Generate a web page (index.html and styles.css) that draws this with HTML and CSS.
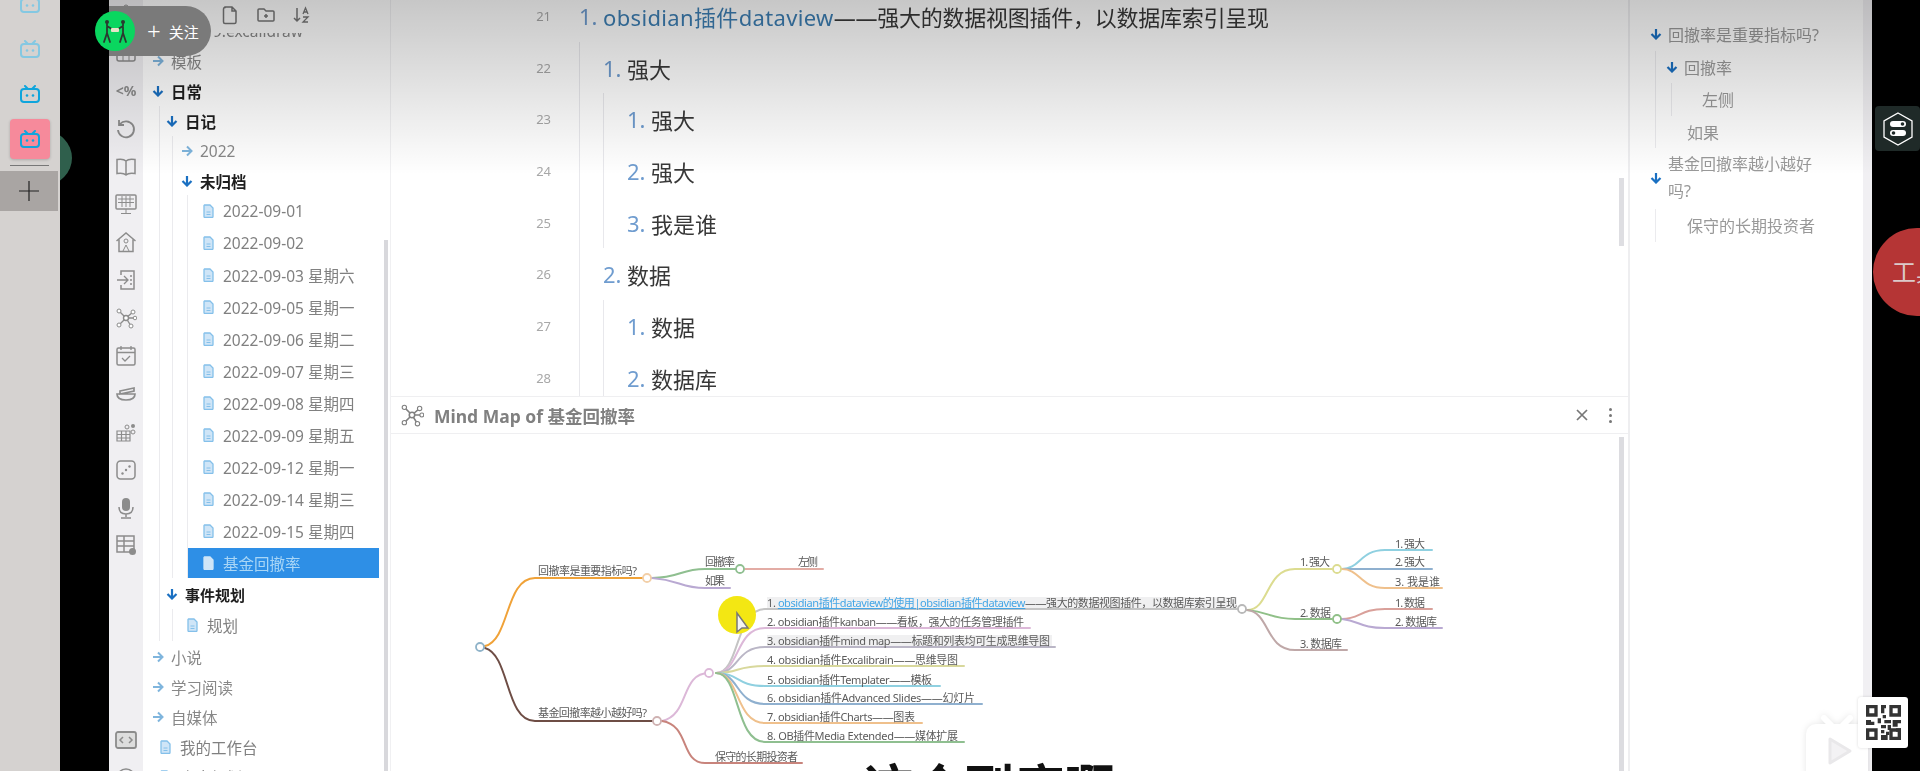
FILE: index.html
```html
<!DOCTYPE html>
<html lang="zh-CN">
<head>
  <meta charset="UTF-8" />
  <meta name="viewport" content="width=device-width, initial-scale=1" />
  <title>基金回撤率 - Obsidian</title>
  <link rel="stylesheet" href="styles.css">
</head>
<body>

  <svg class="sprites" aria-hidden="true">
    <symbol id="i-bili" viewBox="0 0 20 18"><path d="M5 1l3 3M15 1l-3 3" fill="none" stroke="currentColor" stroke-width="2" stroke-linecap="round"/><rect x="1" y="4" width="18" height="13" rx="3" fill="none" stroke="currentColor" stroke-width="2"/><circle cx="7" cy="10.5" r="1.3" fill="currentColor"/><circle cx="13" cy="10.5" r="1.3" fill="currentColor"/></symbol>
    <symbol id="i-down" viewBox="0 0 12 12"><path d="M6 1v9M1.5 6L6 10.5 10.5 6" fill="none" stroke="currentColor" stroke-width="2.2"/></symbol>
    <symbol id="i-right" viewBox="0 0 12 12"><path d="M1 6h9M6 1.5L10.5 6 6 10.5" fill="none" stroke="currentColor" stroke-width="2"/></symbol>
    <symbol id="i-doc" viewBox="0 0 11 14"><path d="M1.5 1h5.5l3 3v8.5a1 1 0 0 1-1 1H2a1 1 0 0 1-1-1v-11z" fill="#cfe5f7" stroke="currentColor" stroke-width="1.3"/><path d="M3.5 8h4M3.5 10.5h4" stroke="currentColor"/></symbol>
    <symbol id="i-file" viewBox="0 0 20 20"><path d="M5 2h7l4 4v11a1.500 1.500 0 0 1-1.500 1.500h-9.500a1.500 1.500 0 0 1-1.500-1.500v-13a1.500 1.500 0 0 1 1.500-1.500zM12 2v4h4" fill="none" stroke="currentColor" stroke-width="1.500"/></symbol>
    <symbol id="i-folder" viewBox="0 0 20 20"><path d="M2 5a1 1 0 0 1 1-1h5l2 2h7a1 1 0 0 1 1 1v8a1 1 0 0 1-1 1h-14a1 1 0 0 1-1-1zM10 9v4M8 11h4" fill="none" stroke="currentColor" stroke-width="1.500"/></symbol>
    <symbol id="i-sort" viewBox="0 0 20 20"><path d="M5 3v13M2 13l3 3 3-3" fill="none" stroke="currentColor" stroke-width="1.500"/><path d="M11 9l2.500-6 2.500 6M12 7h3M11 12h5l-5 5h5" fill="none" stroke="currentColor" stroke-width="1.300"/></symbol>
    <symbol id="i-clip" viewBox="0 0 22 22"><rect x="6" y="5" width="10" height="14" rx="2" fill="none" stroke="currentColor" stroke-width="1.500"/><circle cx="11" cy="3" r="2" fill="none" stroke="currentColor"/></symbol>
    <symbol id="i-table" viewBox="0 0 22 22"><rect x="2" y="3" width="18" height="16" rx="2" fill="none" stroke="currentColor" stroke-width="1.500"/><path d="M2 8h18M2 13.500h18M8 3v16M14 3v16" stroke="currentColor"/></symbol>
    <symbol id="i-undo" viewBox="0 0 22 22"><path d="M5 6a8 8 0 1 1-2 6M4 2v5h5" fill="none" stroke="currentColor" stroke-width="1.800"/></symbol>
    <symbol id="i-book" viewBox="0 0 22 22"><path d="M11 5C9 3 5 3 2 3.500v14c3-.5 7-.5 9 1.500 2-2 6-2 9-1.500v-14C17 3 13 3 11 5zv14" fill="none" stroke="currentColor" stroke-width="1.500"/></symbol>
    <symbol id="i-monitor" viewBox="0 0 22 22"><rect x="1" y="2" width="20" height="14" rx="1" fill="none" stroke="currentColor" stroke-width="1.500"/><path d="M3 6h16M3 9.500h16M7 3v11M11 3v11M15 3v11M11 16v4M6 20.500h10" stroke="currentColor"/></symbol>
    <symbol id="i-home" viewBox="0 0 22 22"><path d="M1.500 10L11 2l9.500 8M4 8.500V20.500h14V8.500" fill="none" stroke="currentColor" stroke-width="1.500"/><circle cx="11" cy="10" r="2" fill="none" stroke="currentColor"/><path d="M8 20l3-6 3 6" fill="none" stroke="currentColor"/></symbol>
    <symbol id="i-import" viewBox="0 0 22 22"><path d="M6 6V2h13v18H6v-4" fill="none" stroke="currentColor" stroke-width="1.500"/><path d="M2 11h11M9 7l4 4-4 4M15 7h2M15 11h2M15 15h2" fill="none" stroke="currentColor" stroke-width="1.300"/></symbol>
    <symbol id="i-graph" viewBox="0 0 22 22"><path d="M11 11L4 4M11 11l7-6M11 11H20M11 11l-7 7M11 11l5 8" stroke="currentColor" stroke-width="1.400"/><circle cx="11" cy="11" r="2.500" fill="#fff" stroke="currentColor" stroke-width="1.400"/><circle cx="4" cy="4" r="2" fill="#fff" stroke="currentColor"/><circle cx="18" cy="5" r="2" fill="#fff" stroke="currentColor"/><circle cx="20" cy="11" r="1.800" fill="#fff" stroke="currentColor"/><circle cx="4" cy="18" r="2" fill="#fff" stroke="currentColor"/><circle cx="16" cy="19" r="2" fill="#fff" stroke="currentColor"/></symbol>
    <symbol id="i-cal" viewBox="0 0 22 22"><rect x="2" y="3" width="18" height="17" rx="1.500" fill="none" stroke="currentColor" stroke-width="1.500"/><path d="M2 7.500h18M6 1v4M16 1v4M7 13l3 3 5-5" fill="none" stroke="currentColor" stroke-width="1.300"/></symbol>
    <symbol id="i-stack" viewBox="0 0 22 22"><path d="M2 11c0 4 3 6 9 6s9-2 9-6zM5 8l14-3v3l-14 3z" fill="none" stroke="currentColor" stroke-width="1.700"/></symbol>
    <symbol id="i-blocks" viewBox="0 0 22 22"><path d="M2 10h13v10H2zM2 13.500h13M2 17h13M6.500 10v10M11 10v10" fill="none" stroke="currentColor" stroke-width="1.200"/><circle cx="18" cy="5" r="2" fill="currentColor"/><circle cx="12" cy="6" r="2" fill="none" stroke="currentColor"/><circle cx="18" cy="11" r="2" fill="none" stroke="currentColor"/></symbol>
    <symbol id="i-dice" viewBox="0 0 22 22"><rect x="2" y="2" width="18" height="18" rx="3.500" fill="none" stroke="currentColor" stroke-width="1.500"/><circle cx="7.500" cy="14.500" r="1.200" fill="currentColor"/><circle cx="11" cy="11" r="1.200" fill="currentColor"/><circle cx="14.500" cy="7.500" r="1.200" fill="currentColor"/></symbol>
    <symbol id="i-mic" viewBox="0 0 22 22"><rect x="7" y="1" width="8" height="13" rx="4" fill="currentColor"/><path d="M4 10c0 5 3 7 7 7s7-2 7-7M11 17v3M6 21h10" fill="none" stroke="currentColor" stroke-width="1.500"/></symbol>
    <symbol id="i-tabledot" viewBox="0 0 22 22"><path d="M2 2h17v16H2zM2 7h17M2 12h17M9 2v16" fill="none" stroke="currentColor" stroke-width="1.500"/><circle cx="17.500" cy="17.500" r="3.500" fill="currentColor"/></symbol>
    <symbol id="i-expand" viewBox="0 0 22 22"><rect x="1" y="3" width="20" height="16" rx="2" fill="#ddd" stroke="currentColor" stroke-width="1.800"/><path d="M8 8l-3 3 3 3M14 8l3 3-3 3" fill="none" stroke="currentColor" stroke-width="1.500"/></symbol>
    <symbol id="i-circle" viewBox="0 0 22 22"><circle cx="11" cy="11" r="9" fill="none" stroke="currentColor" stroke-width="1.500"/></symbol>
  </svg>

  <div class="screen">

    <div class="tabs">
      <div class="tab tab-faded"><svg><use href="#i-bili"/></svg></div>
      <div class="tab tab-faded"><svg><use href="#i-bili"/></svg></div>
      <div class="tab"><svg><use href="#i-bili"/></svg></div>
      <div class="tab tab-active"><svg><use href="#i-bili"/></svg></div>
      <div class="tab-line"></div>
      <div class="tab-add">
        <svg viewBox="0 0 20 20"><path d="M10 0v20M0 10h20" stroke="#222" stroke-width="1.200"/></svg>
      </div>
    </div>

    <div class="letterbox">
      <div class="letterbox-circle"></div>
    </div>

    <div class="app">
      <div class="ribbon">
        <svg><use href="#i-clip"/></svg>
        <svg><use href="#i-table"/></svg>
        <span class="ribbon-text">&lt;%</span>
        <svg><use href="#i-undo"/></svg>
        <svg><use href="#i-book"/></svg>
        <svg><use href="#i-monitor"/></svg>
        <svg><use href="#i-home"/></svg>
        <svg><use href="#i-import"/></svg>
        <svg><use href="#i-graph"/></svg>
        <svg><use href="#i-cal"/></svg>
        <svg><use href="#i-stack"/></svg>
        <svg><use href="#i-blocks"/></svg>
        <svg><use href="#i-dice"/></svg>
        <svg><use href="#i-mic"/></svg>
        <svg><use href="#i-tabledot"/></svg>
        <svg class="ribbon-bottom"><use href="#i-expand"/></svg>
        <svg><use href="#i-circle"/></svg>
      </div>

      <div class="tree">
        <div class="tree-tools">
          <svg><use href="#i-file"/></svg>
          <svg><use href="#i-folder"/></svg>
          <svg><use href="#i-sort"/></svg>
        </div>
        <div class="tree-list">
          <div class="row closed row-cut">9.excalidraw</div>
          <div class="row closed"><svg class="arrow"><use href="#i-right"/></svg>模板</div>
          <div class="row open"><svg class="arrow"><use href="#i-down"/></svg>日常</div>
          <div class="children">
            <div class="row open"><svg class="arrow"><use href="#i-down"/></svg>日记</div>
            <div class="children children-2">
              <div class="row closed"><svg class="arrow"><use href="#i-right"/></svg>2022</div>
              <div class="row open"><svg class="arrow"><use href="#i-down"/></svg>未归档</div>
              <div class="children children-3">
                <div class="file"><svg class="doc"><use href="#i-doc"/></svg>2022-09-01</div>
                <div class="file"><svg class="doc"><use href="#i-doc"/></svg>2022-09-02</div>
                <div class="file"><svg class="doc"><use href="#i-doc"/></svg>2022-09-03 星期六</div>
                <div class="file"><svg class="doc"><use href="#i-doc"/></svg>2022-09-05 星期一</div>
                <div class="file"><svg class="doc"><use href="#i-doc"/></svg>2022-09-06 星期二</div>
                <div class="file"><svg class="doc"><use href="#i-doc"/></svg>2022-09-07 星期三</div>
                <div class="file"><svg class="doc"><use href="#i-doc"/></svg>2022-09-08 星期四</div>
                <div class="file"><svg class="doc"><use href="#i-doc"/></svg>2022-09-09 星期五</div>
                <div class="file"><svg class="doc"><use href="#i-doc"/></svg>2022-09-12 星期一</div>
                <div class="file"><svg class="doc"><use href="#i-doc"/></svg>2022-09-14 星期三</div>
                <div class="file"><svg class="doc"><use href="#i-doc"/></svg>2022-09-15 星期四</div>
                <div class="file file-selected"><svg class="doc"><use href="#i-doc"/></svg>基金回撤率</div>
              </div>
            </div>
            <div class="row open row-small"><svg class="arrow"><use href="#i-down"/></svg>事件规划</div>
            <div class="children children-2b">
              <div class="file"><svg class="doc"><use href="#i-doc"/></svg>规划</div>
            </div>
          </div>
          <div class="row closed row-after"><svg class="arrow"><use href="#i-right"/></svg>小说</div>
          <div class="row closed"><svg class="arrow"><use href="#i-right"/></svg>学习阅读</div>
          <div class="row closed"><svg class="arrow"><use href="#i-right"/></svg>自媒体</div>
          <div class="file file-top"><svg class="doc"><use href="#i-doc"/></svg>我的工作台</div>
          <div class="file file-top"><svg class="doc"><use href="#i-doc"/></svg>未来规划</div>
        </div>
        <div class="tree-scroll"></div>
      </div>

      <div class="workspace">
        <div class="editor">
          <div class="line"><span class="gutter">21</span><span class="num">1.</span><span class="link">obsidian插件dataview</span><span class="tail">——强大的数据视图插件，以数据库索引呈现</span></div>
          <div class="line"><span class="gutter">22</span><span class="guide"></span><span class="num">1.</span>强大</div>
          <div class="line"><span class="gutter">23</span><span class="guide"></span><span class="guide"></span><span class="num">1.</span>强大</div>
          <div class="line"><span class="gutter">24</span><span class="guide"></span><span class="guide"></span><span class="num">2.</span>强大</div>
          <div class="line"><span class="gutter">25</span><span class="guide"></span><span class="guide"></span><span class="num">3.</span>我是谁</div>
          <div class="line"><span class="gutter">26</span><span class="guide"></span><span class="num">2.</span>数据</div>
          <div class="line"><span class="gutter">27</span><span class="guide"></span><span class="guide"></span><span class="num">1.</span>数据</div>
          <div class="line"><span class="gutter">28</span><span class="guide"></span><span class="guide"></span><span class="num">2.</span>数据库</div>
          <div class="editor-scroll"></div>
        </div>

        <div class="map-head">
          <svg class="map-icon"><use href="#i-graph"/></svg>
          <span class="map-title">Mind Map of 基金回撤率</span>
          <svg class="map-close" viewBox="0 0 14 14"><path d="M2 2l10 10M12 2L2 12" stroke="#777" stroke-width="1.700"/></svg>
          <span class="map-more"><i></i><i></i><i></i></span>
        </div>

        <div class="map-body">
          <svg class="map" viewBox="391 434 1237 337">
            <rect class="mark" x="767" y="597" width="470" height="12"/>
            <rect class="mark" x="767" y="635" width="285" height="12"/>

            <g class="branch">
              <path d="M485 646C510 640 505 578 535 578L643 578" stroke="#f0a238" stroke-width="2.800"/>
              <path d="M485 648C510 655 505 721 535 721L652 721" stroke="#6e4d45" stroke-width="2.800"/>
              <path d="M652 578C680 578 680 569 705 569L736 569" stroke="#8fbf90"/>
              <path d="M745 569L823 569" stroke="#e3aca5"/>
              <path d="M652 578C680 580 680 588 705 588L730 588" stroke="#b9a9d2"/>
              <path d="M662 721C690 715 680 673 709 673" stroke="#dcb8d8"/>
              <path d="M662 721C690 725 680 763 705 763L802 763" stroke="#c8847c"/>
              <path d="M716 673C740 673 735 609 765 609L1237 609" stroke="#c4c4c4"/>
              <path d="M716 673C740 673 735 628 765 628L1030 628" stroke="#dcb8d8"/>
              <path d="M716 673C740 673 735 647 765 647L1055 647" stroke="#bab6c6"/>
              <path d="M716 673C740 673 735 666 765 666L964 666" stroke="#d8d89c"/>
              <path d="M716 673C740 673 735 686 765 686L940 686" stroke="#8fd0e0"/>
              <path d="M716 673C740 673 735 704 765 704L982 704" stroke="#8fb0cf"/>
              <path d="M716 673C740 673 735 723 765 723L922 723" stroke="#efc08c"/>
              <path d="M716 673C740 673 735 742 765 742L964 742" stroke="#8fbf90"/>
              <path d="M1247 610C1270 610 1265 569 1295 569L1332 569" stroke="#dcdc90"/>
              <path d="M1247 610C1270 612 1270 619 1295 619L1332 619" stroke="#90c088"/>
              <path d="M1247 610C1270 612 1265 650 1295 650L1347 650" stroke="#bfa8a8"/>
              <path d="M1342 569C1360 569 1360 550 1385 550L1432 550" stroke="#8fd0e0"/>
              <path d="M1342 569L1432 569" stroke="#8fb0cf"/>
              <path d="M1342 569C1360 569 1360 588 1385 588L1442 588" stroke="#efc08c"/>
              <path d="M1342 619C1360 619 1360 609 1385 609L1432 609" stroke="#d9a09a"/>
              <path d="M1342 619C1360 621 1360 628 1385 628L1442 628" stroke="#b9a9d2"/>
            </g>

            <g class="dots">
              <circle cx="480" cy="647" r="4" stroke="#8fb3c9"/>
              <circle cx="647" cy="578" r="4" stroke="#f2cfa8"/>
              <circle cx="740" cy="569" r="4" stroke="#8fbf90"/>
              <circle cx="657" cy="721" r="4" stroke="#cfb2b2"/>
              <circle cx="709" cy="673" r="4" stroke="#dcb8d8"/>
              <circle cx="1242" cy="609" r="4" stroke="#b8b8b8"/>
              <circle cx="1337" cy="569" r="4" stroke="#dcdc90"/>
              <circle cx="1337" cy="619" r="4" stroke="#90c088"/>
            </g>

            <g class="labels">
              <text x="538" y="575" textLength="99">回撤率是重要指标吗?</text>
              <text x="538" y="717" textLength="109">基金回撤率越小越好吗?</text>
              <text x="705" y="566" textLength="30">回撤率</text>
              <text x="798" y="566" textLength="20">左侧</text>
              <text x="705" y="585" textLength="20">如果</text>
              <text x="715" y="761" textLength="83">保守的长期投资者</text>
              <text x="767" y="607" textLength="470">1. <tspan class="map-link">obsidian插件dataview的使用|obsidian插件dataview</tspan>——强大的数据视图插件，以数据库索引呈现</text>
              <text x="767" y="626" textLength="257">2. obsidian插件kanban——看板，强大的任务管理插件</text>
              <text x="767" y="645" textLength="283">3. obsidian插件mind map——标题和列表均可生成思维导图</text>
              <text x="767" y="664" textLength="191">4. obsidian插件Excalibrain——思维导图</text>
              <text x="767" y="684" textLength="165">5. obsidian插件Templater——模板</text>
              <text x="767" y="702" textLength="208">6. obsidian插件Advanced Slides——幻灯片</text>
              <text x="767" y="721" textLength="148">7. obsidian插件Charts——图表</text>
              <text x="767" y="740" textLength="191">8. OB插件Media Extended——媒体扩展</text>
              <text x="1300" y="566" textLength="30">1. 强大</text>
              <text x="1300" y="617" textLength="31">2. 数据</text>
              <text x="1300" y="648" textLength="42">3. 数据库</text>
              <text x="1395" y="548" textLength="30">1. 强大</text>
              <text x="1395" y="566" textLength="30">2. 强大</text>
              <text x="1395" y="586" textLength="45">3. 我是谁</text>
              <text x="1395" y="607" textLength="30">1. 数据</text>
              <text x="1395" y="626" textLength="42">2. 数据库</text>
            </g>

            <circle cx="737" cy="615" r="19" fill="#f3e713"/>
            <path d="M737 613l0 19 5-4 6 0z" fill="#f4f4f0" stroke="#777" stroke-width="1.500"/>
          </svg>
          <div class="map-scroll"></div>
        </div>
      </div>

      <div class="outline">
        <div class="toc"><svg class="arrow"><use href="#i-down"/></svg>回撤率是重要指标吗?</div>
        <div class="toc-kids">
          <div class="toc"><svg class="arrow"><use href="#i-down"/></svg>回撤率</div>
          <div class="toc-kids">
            <div class="toc toc-leaf">左侧</div>
          </div>
          <div class="toc toc-plain">如果</div>
        </div>
        <div class="toc toc-wrap"><svg class="arrow"><use href="#i-down"/></svg><span>基金回撤率越小越好吗?</span></div>
        <div class="toc-kids">
          <div class="toc toc-plain">保守的长期投资者</div>
        </div>
      </div>

      <div class="app-edge"></div>
    </div>

    <!-- video player stuff on top of the recording -->
    <div class="top-shade"></div>

    <div class="follow">
      <span class="follow-plus">+</span>关注
    </div>
    <div class="avatar">
      <svg viewBox="0 0 40 40">
        <g fill="none" stroke="#2a3a30" stroke-width="1.800" stroke-linecap="round">
          <path d="M12 13v9l-3 9M12 22l3 9M12 15l8 5"/>
          <path d="M28 13v9l3 9M28 22l-3 9M28 15l-8 5"/>
        </g>
        <circle cx="12" cy="11" r="2" fill="#2a3a30"/>
        <circle cx="28" cy="11" r="2" fill="#2a3a30"/>
        <rect x="16" y="17" width="8" height="4" rx="1" fill="#e8e4c8"/>
      </svg>
    </div>

    <div class="subtitle">这个到底啊</div>

    <div class="badge">
      <svg viewBox="0 0 32 34" width="32" height="34">
        <path d="M16 1l14 8v16l-14 8-14-8v-16z" fill="none" stroke="#fff" stroke-width="1.300"/>
        <path d="M16 4l11 6.500v13l-11 6.500-11-6.500v-13z" fill="#1f2a28"/>
        <rect x="8" y="9" width="16" height="6" rx="3" fill="#fff"/>
        <circle cx="20.500" cy="12" r="1.800" fill="#1f2a28"/>
        <rect x="8" y="18" width="16" height="6" rx="3" fill="#fff"/>
        <circle cx="11.500" cy="21" r="1.800" fill="#1f2a28"/>
      </svg>
    </div>

    <div class="tool-ball">工具</div>

    <svg class="watermark" viewBox="0 0 66 60">
      <path d="M20 3l7 7M46 3l-7 7" stroke="#fff" stroke-width="6" stroke-linecap="round"/>
      <rect x="2" y="9" width="62" height="60" rx="10" fill="#fff"/>
      <path d="M26 24l20 12-20 12z" fill="#f3f2f4" stroke="#e9e8ea" stroke-width="3" stroke-linejoin="round"/>
    </svg>

    <div class="qr">
      <svg viewBox="0 0 21 21" width="35" height="35">
        <g fill="#333">
          <path d="M0 0h7v7h-7zM2 2v3h3v-3zM14 0h7v7h-7zM16 2v3h3v-3zM0 14h7v7h-7zM2 16v3h3v-3z" fill-rule="evenodd"/>
          <path d="M9 0h3v2h-1v3h-2zM10 6h2v2h-2zM0 9h3v1h2v2h-5zM7 8h2v3h-2zM11 9h4v2h-4zM16 9h5v2h-2v2h-3zM9 12h3v2h-3zM13 12h2v3h-2zM9 15h2v2h-2zM12 16h2v2h-2zM9 18h4v3h-4zM18 14h3v2h-3z"/>
          <path d="M14 14h7v7h-7zM16 16v3h3v-3z" fill-rule="evenodd"/>
        </g>
      </svg>
    </div>

  </div>

</body>
</html>
```

FILE: styles.css
```css
* {
  box-sizing: border-box;
}
body {
  margin: 0;
  background-color: #000;
  font-family: "Noto Sans", "Noto Sans CJK SC", sans-serif;
}
.sprites {
  display: none;
}
.screen {
  position: relative;
  display: flex;
  width: 1920px;
  height: 771px;
  overflow: hidden;
  background-color: #000;
}

/* browser tab strip on the left */
.tabs {
  width: 60px;
  flex-shrink: 0;
  background-color: #d5d2d0;
  padding-top: 1px;
  display: flex;
  flex-direction: column;
  overflow: hidden;
}
.tab {
  width: 40px;
  height: 40px;
  margin: 0 0 5px 10px;
  display: flex;
  align-items: center;
  justify-content: center;
  color: #0fa5dc;
  border-radius: 4px;
}
.tab:first-child {
  margin-top: -17px;
}
.tab svg {
  width: 20px;
  height: 18px;
}
.tab-faded {
  color: #84c8e2;
}
.tab-active {
  background-color: #f68a9b;
  box-shadow: 0 1px 3px rgba(0, 0, 0, 0.2);
}
.tab-line {
  height: 1px;
  margin: 1px 11px 5px 10px;
  background-color: #777;
}
.tab-add {
  width: 58px;
  height: 40px;
  background-color: #a9a5a3;
  display: flex;
  align-items: center;
  justify-content: center;
}
.tab-add svg {
  width: 20px;
  height: 20px;
}

.letterbox {
  position: relative;
  width: 49px;
  flex-shrink: 0;
  overflow: hidden;
}
.letterbox-circle {
  position: absolute;
  left: -42px;
  top: 131px;
  width: 54px;
  height: 54px;
  border-radius: 50%;
  background-color: #2f5f4c;
}

/* the recorded obsidian window */
.app {
  display: flex;
  width: 1763px;
  height: 771px;
  flex-shrink: 0;
  background-color: #fff;
  overflow: hidden;
  filter: blur(0.6px);
}

.ribbon {
  width: 34px;
  flex-shrink: 0;
  background-color: #f0eff2;
  color: #8c8c8c;
  padding-top: 4px;
  display: flex;
  flex-direction: column;
  align-items: center;
  gap: 15.9px;
}
.ribbon svg {
  width: 22px;
  height: 22px;
  flex-shrink: 0;
}
.ribbon-text {
  height: 22px;
  line-height: 22px;
  font-size: 14px;
  font-weight: bold;
  white-space: nowrap;
}
.ribbon .ribbon-bottom {
  margin-top: 157px;
}

.tree {
  position: relative;
  width: 247px;
  flex-shrink: 0;
  overflow: hidden;
}
.tree-tools {
  position: relative;
  z-index: 1;
  height: 33px;
  padding: 5px 0 0 77px;
  background-color: #fff;
  color: #777;
  display: flex;
  gap: 16px;
}
.tree-tools svg {
  width: 20px;
  height: 20px;
}
.tree-list {
  margin-top: -17px;
  padding: 0 11px 0 9px;
  font-size: 15.5px;
}
.row {
  height: 30px;
  display: flex;
  align-items: center;
  white-space: nowrap;
}
.row-cut {
  padding-left: 61px;
}
.row-after {
  margin-top: 1px;
}
.arrow {
  width: 12px;
  height: 12px;
  margin-right: 7px;
  flex-shrink: 0;
}
.closed {
  color: #888;
}
.closed .arrow {
  color: #7fb5dd;
}
.open {
  color: #1e1e1e;
  font-weight: bold;
}
.open .arrow {
  color: #1a70c2;
}
.row-small {
  font-size: 15px;
  margin-top: 1px;
}
.children {
  margin-left: 7px;
  padding-left: 6px;
  border-left: 1px solid #ebebee;
}
.children-2 {
  margin-left: 6px;
  padding-left: 8px;
}
.children-2b {
  margin-left: 6px;
  padding-left: 0;
}
.children-3 {
  margin-left: 6px;
  margin-top: -1px;
  padding-left: 0;
}
.file {
  height: 32px;
  padding-left: 15px;
  display: flex;
  align-items: center;
  color: #808080;
  white-space: nowrap;
}
.children-2b .file {
  padding-left: 14px;
}
.doc {
  width: 11px;
  height: 14px;
  margin-right: 9px;
  flex-shrink: 0;
  color: #84c0ea;
}
.file-selected {
  height: 30px;
  margin-top: 1px;
  background-color: #2e8fe6;
  color: #a9d6f6;
}
.file-selected .doc {
  color: #cfe6f8;
}
.file-top {
  height: 30px;
  padding-left: 8px;
}
.tree-scroll {
  position: absolute;
  top: 240px;
  right: 2px;
  bottom: 0;
  width: 4px;
  background-color: #d8d8dc;
}

.workspace {
  width: 1238px;
  flex-shrink: 0;
  border-left: 1px solid #f0f0f2;
}
.editor {
  position: relative;
  height: 397px;
  overflow: hidden;
  border-bottom: 1px solid #efeff1;
}
.line {
  height: 51.7px;
  display: flex;
  align-items: center;
  font-size: 22px;
  color: #383838;
  white-space: nowrap;
}
.line:first-child {
  margin-top: -10px;
}
.gutter {
  width: 160px;
  margin-right: 28px;
  text-align: right;
  font-size: 13px;
  color: #a8a8a8;
  flex-shrink: 0;
}
.guide {
  width: 24px;
  height: 100%;
  border-left: 1px solid #e8e8ec;
  flex-shrink: 0;
}
.num {
  width: 24px;
  color: #6f9ccf;
  flex-shrink: 0;
}
.link {
  color: #3d7fb4;
  letter-spacing: 0.35px;
}
.tail {
  letter-spacing: -0.25px;
}
.editor-scroll {
  position: absolute;
  top: 178px;
  right: 4px;
  width: 5px;
  height: 68px;
  background-color: #dedee2;
}

.map-head {
  height: 37px;
  padding: 0 16px 0 9px;
  display: flex;
  align-items: center;
  border-bottom: 1px solid #efeff1;
  color: #808080;
}
.map-icon {
  width: 24px;
  height: 24px;
  margin-right: 10px;
}
.map-title {
  flex: 1;
  font-size: 17.5px;
  font-weight: bold;
}
.map-close {
  width: 14px;
  height: 14px;
  margin-right: 20px;
}
.map-more {
  display: flex;
  flex-direction: column;
  gap: 3px;
}
.map-more i {
  width: 3px;
  height: 3px;
  border-radius: 50%;
  background-color: #777;
}

.map-body {
  position: relative;
  height: 337px;
  overflow: hidden;
}
.map {
  display: block;
  width: 1237px;
  height: 337px;
}
.mark {
  fill: #f0f0f1;
}
.branch path {
  fill: none;
  stroke-width: 2;
  stroke-linecap: round;
}
.dots circle {
  fill: #fff;
  stroke-width: 1.8;
}
.labels text {
  font-size: 11px;
  fill: #5a5a5a;
}
.map-link {
  fill: #45a6e6;
  text-decoration: underline;
}
.map-scroll {
  position: absolute;
  top: 3px;
  right: 4px;
  bottom: 0;
  width: 5px;
  background-color: #dcdce0;
}

.outline {
  width: 235px;
  flex-shrink: 0;
  border-left: 2px solid #eeeef0;
  padding: 18px 43px 0 20px;
  font-size: 16px;
  color: #999;
}
.toc {
  min-height: 32.5px;
  display: flex;
  align-items: center;
}
.toc .arrow {
  color: #1a70c2;
  margin-right: 6px;
  margin-left: 0;
}
.toc-kids {
  margin-left: 5px;
  padding-left: 10px;
  border-left: 1px solid #ebebee;
}
.toc-leaf {
  padding-left: 20px;
}
.toc-plain {
  padding-left: 21px;
}
.toc-wrap {
  line-height: 27px;
  padding: 3px 0 4px;
}
.app-edge {
  width: 9px;
  flex-shrink: 0;
  background-color: #f1f0f3;
}

/* overlays from the video player */
.top-shade {
  position: absolute;
  left: 109px;
  top: 0;
  width: 1763px;
  height: 175px;
  background: linear-gradient(to bottom, rgba(0, 0, 0, 0.22), rgba(0, 0, 0, 0));
}
.follow {
  position: absolute;
  left: 109px;
  top: 6px;
  width: 102px;
  height: 50px;
  padding-left: 38px;
  border-radius: 0 25px 25px 0;
  background-color: #7a7a7a;
  color: #fff;
  font-size: 15px;
  display: flex;
  align-items: center;
}
.follow-plus {
  font-size: 24px;
  font-weight: 300;
  margin-right: 8px;
  line-height: 1;
}
.avatar {
  position: absolute;
  left: 95px;
  top: 11px;
  width: 40px;
  height: 40px;
  border-radius: 50%;
  background-color: #0ad65f;
}
.avatar svg {
  display: block;
}
.subtitle {
  position: absolute;
  left: 864px;
  top: 762px;
  font-size: 50px;
  line-height: 1;
  font-weight: bold;
  color: #111;
  white-space: nowrap;
}
.badge {
  position: absolute;
  left: 1875px;
  top: 106px;
  width: 45px;
  height: 45px;
  border-radius: 4px;
  background-color: #1f2a28;
  display: flex;
  align-items: center;
  justify-content: center;
}
.tool-ball {
  position: absolute;
  left: 1873px;
  top: 228px;
  width: 88px;
  height: 88px;
  padding-left: 19px;
  border-radius: 50%;
  background-color: #b53535;
  color: #dccaca;
  font-size: 24px;
  line-height: 88px;
  white-space: nowrap;
}
.watermark {
  position: absolute;
  left: 1804px;
  top: 715px;
  width: 66px;
  height: 60px;
  filter: drop-shadow(0 0 3px rgba(0, 0, 0, 0.1));
}
.qr {
  position: absolute;
  left: 1858px;
  top: 697px;
  width: 50px;
  height: 51px;
  border-radius: 3px;
  background-color: #fff;
  box-shadow: 0 0 3px rgba(0, 0, 0, 0.15);
  display: flex;
  align-items: center;
  justify-content: center;
}
```
